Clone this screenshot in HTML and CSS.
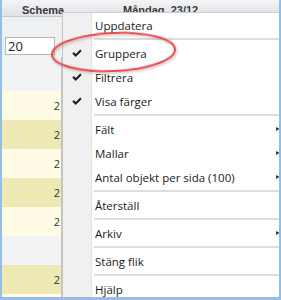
FILE: index.html
```html
<!DOCTYPE html>
<html lang="sv">
<head>
<meta charset="utf-8">
<link rel="stylesheet" href="styles.css">
</head>
<body>
<div class="frame">
  <div class="header">
    <div class="hcell hcell-schema">Schema</div>
    <div class="hcell hcell-day">Måndag, 23/12</div>
  </div>
  <div class="filter">
    <div class="filter-cell"><div class="input">20</div></div>
  </div>
  <div class="rows">
    <div class="row row-grey"><div class="cell"></div></div>
    <div class="row row-cream"><div class="cell">2</div></div>
    <div class="row row-yellow"><div class="cell">2</div></div>
    <div class="row row-cream"><div class="cell">2</div></div>
    <div class="row row-yellow"><div class="cell">2</div></div>
    <div class="row row-cream"><div class="cell">2</div></div>
    <div class="row row-grey"><div class="cell"></div></div>
    <div class="row row-yellow"><div class="cell">2</div></div>
    <div class="row row-cream"><div class="cell"></div></div>
  </div>

  <div class="menu">
    <div class="item"><span class="slot"></span><span class="label">Uppdatera</span></div>
    <div class="sep"></div>
    <div class="item"><span class="slot"><svg class="check" viewBox="0 0 10 9"><path d="M0.3 4.6 L1.8 3.1 L3.7 5 L8.2 0.5 L9.7 2 L3.7 8 Z"/></svg></span><span class="label">Gruppera</span></div>
    <div class="item"><span class="slot"><svg class="check" viewBox="0 0 10 9"><path d="M0.3 4.6 L1.8 3.1 L3.7 5 L8.2 0.5 L9.7 2 L3.7 8 Z"/></svg></span><span class="label">Filtrera</span></div>
    <div class="item"><span class="slot"><svg class="check" viewBox="0 0 10 9"><path d="M0.3 4.6 L1.8 3.1 L3.7 5 L8.2 0.5 L9.7 2 L3.7 8 Z"/></svg></span><span class="label">Visa färger</span></div>
    <div class="sep"></div>
    <div class="item"><span class="slot"></span><span class="label">Fält</span><span class="arrow"></span></div>
    <div class="item"><span class="slot"></span><span class="label">Mallar</span><span class="arrow"></span></div>
    <div class="item"><span class="slot"></span><span class="label">Antal objekt per sida (100)</span><span class="arrow"></span></div>
    <div class="sep"></div>
    <div class="item"><span class="slot"></span><span class="label">Återställ</span></div>
    <div class="sep"></div>
    <div class="item"><span class="slot"></span><span class="label">Arkiv</span><span class="arrow"></span></div>
    <div class="sep"></div>
    <div class="item"><span class="slot"></span><span class="label">Stäng flik</span></div>
    <div class="sep"></div>
    <div class="item"><span class="slot"></span><span class="label">Hjälp</span></div>
  </div>

  <svg class="ring" width="281" height="300" viewBox="0 0 281 300">
    <defs>
      <filter id="sh" x="-10%" y="-30%" width="120%" height="160%">
        <feDropShadow dx="1" dy="1.5" stdDeviation="1" flood-color="#000" flood-opacity="0.25"/>
      </filter>
    </defs>
    <ellipse cx="113.5" cy="52" rx="61.5" ry="19" transform="rotate(-2.5 113.5 52)" fill="none" stroke="#e8484b" stroke-width="2" filter="url(#sh)"/>
  </svg>
</div>
</body>
</html>
```

FILE: styles.css
```css
html, body {
  margin: 0;
  padding: 0;
  background: #ffffff;
}

.frame {
  position: relative;
  width: 281px;
  height: 300px;
  box-sizing: border-box;
  overflow: hidden;
  border-left: 2px solid #95bde6;
  border-right: 2px solid #95bde6;
  border-bottom: 3px solid #95bde6;
  background: #eff0f2;
  font-family: "Open Sans", "Noto Sans", sans-serif;
}

.header {
  display: flex;
  align-items: flex-end;
  height: 16px;
  background: linear-gradient(#f3f4f6, #dee2e6);
  border-bottom: 1px solid #c6cacf;
  font-family: "Liberation Sans", Arial, sans-serif;
  font-weight: bold;
  font-size: 11px;
  line-height: 12px;
  color: #3a3a3a;
  white-space: nowrap;
}

.hcell-schema {
  width: 59px;
  padding-left: 20px;
  box-sizing: border-box;
  flex: none;
}

.hcell-day {
  padding-left: 62px;
}

.filter {
  height: 40px;
  box-sizing: border-box;
  padding-top: 20px;
  padding-left: 3px;
  background: #eff0f2;
}

.input {
  width: 50px;
  height: 18px;
  box-sizing: border-box;
  border: 1px solid #b4b8be;
  background: #ffffff;
  font-size: 13px;
  line-height: 16px;
  padding-left: 2px;
  color: #222;
}

.rows {
  display: flex;
  flex-direction: column;
}

.row {
  height: 29px;
  flex: none;
}

.row:first-child {
  height: 34px;
}

.row-grey { background: #f2f3f4; }
.row-cream { background: #fffbe4; }
.row-yellow { background: #eee8b4; }

.cell {
  width: 60px;
  height: 100%;
  box-sizing: border-box;
  border-right: 1px solid #c3c3c3;
  text-align: right;
  padding-right: 1px;
  font-size: 11px;
  line-height: 29px;
  color: #333;
}

.menu {
  position: absolute;
  left: 60px;
  top: 12px;
  right: -4px;
  bottom: 0;
  box-sizing: border-box;
  border-top: 1px solid #cdcdcd;
  border-left: 1px solid #c4c4c4;
  background: linear-gradient(to right, #f0f0f0 0, #f0f0f0 28px, #e2e3e3 28px, #e2e3e3 29px, #ffffff 29px);
  color: #1a1a1a;
  font-size: 11.5px;
}

.item {
  display: flex;
  align-items: center;
  height: 24px;
}

.slot {
  width: 28px;
  flex: none;
  display: flex;
  justify-content: center;
  align-items: center;
}

.check {
  width: 10px;
  height: 9px;
  fill: #1e1e1e;
}

.label {
  margin-left: 4px;
  white-space: nowrap;
}

.arrow {
  margin-left: auto;
  margin-right: 3px;
  width: 0;
  height: 0;
  border-top: 2.5px solid transparent;
  border-bottom: 2.5px solid transparent;
  border-left: 4px solid #444;
}

.sep {
  height: 2px;
  margin: 1px 0 1px 31px;
  background: #dcdcdc;
  border-top: 0;
}

.ring {
  position: absolute;
  left: -2px;
  top: 0;
  pointer-events: none;
}
```
